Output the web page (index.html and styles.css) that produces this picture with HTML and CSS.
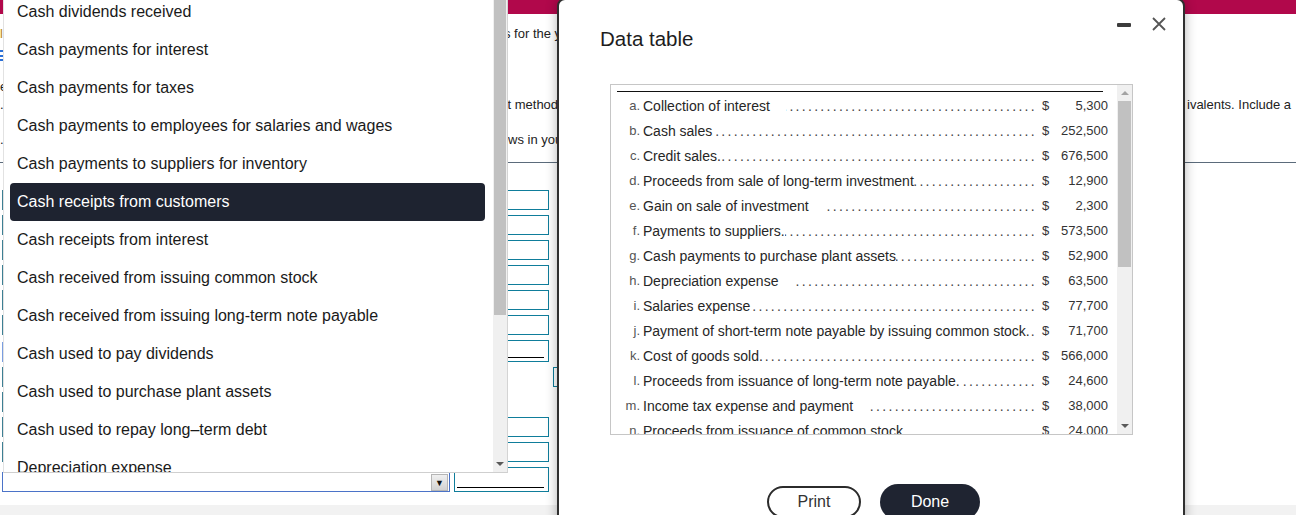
FILE: index.html
```html
<!DOCTYPE html>
<html>
<head>
<meta charset="utf-8">
<title>Data table</title>
<link rel="stylesheet" href="styles.css">
</head>
<body>
<div class="page">
  <div class="topbar"></div>
  <div class="lines">
    <div class="line l1"><span class="c1"><span class="tan">l</span></span><span class="c2 ind4">s for the year</span><span class="c3"></span><span class="c4"></span></div>
    <div class="line l-ico"><span class="c1"><span class="ico"></span></span><span class="c2"></span><span class="c3"></span><span class="c4"></span></div>
    <div class="line l-e"><span class="c1">e</span><span class="c2"></span><span class="c3"></span><span class="c4"></span></div>
    <div class="line l3"><span class="c1">.</span><span class="c2 ind7">ct method</span><span class="c3"></span><span class="c4 pad2">ivalents. Include a</span></div>
    <div class="line l4"><span class="c1">.</span><span class="c2">ws in your</span><span class="c3"></span><span class="c4"></span></div>
  </div>
  <div class="rule"></div>
  <div class="form">
    <div class="frow"><span></span><span class="sel"></span><span></span><span class="inp"></span></div>
    <div class="frow"><span></span><span class="sel"></span><span></span><span class="inp"></span></div>
    <div class="frow"><span></span><span class="sel"></span><span></span><span class="inp"></span></div>
    <div class="frow"><span></span><span class="sel"></span><span></span><span class="inp"></span></div>
    <div class="frow"><span></span><span class="sel"></span><span></span><span class="inp"></span></div>
    <div class="frow"><span></span><span class="sel"></span><span></span><span class="inp"></span></div>
    <div class="frow tall"><span></span><span class="sel sel-blue"></span><span></span><span class="inp total"></span></div>
    <div class="frow"><span></span><span class="sel"></span><span></span><span></span><span></span><span class="inp"></span></div>
    <div class="frow"><span></span><span class="sel"></span><span></span><span></span></div>
    <div class="frow"><span></span><span class="sel"></span><span></span><span class="inp"></span></div>
    <div class="frow"><span></span><span class="sel"></span><span></span><span class="inp"></span></div>
    <div class="frow last"><span></span><span class="sel sel-focus"><span class="sel-btn">&#9660;</span></span><span></span><span class="inp total"></span></div>
  </div>
  <div class="footer"></div>
</div>

<div class="dropdown">
  <div class="dd-list">
    <ul class="dd-items">
      <li>Cash dividends received</li>
      <li>Cash payments for interest</li>
      <li>Cash payments for taxes</li>
      <li>Cash payments to employees for salaries and wages</li>
      <li>Cash payments to suppliers for inventory</li>
      <li class="active">Cash receipts from customers</li>
      <li>Cash receipts from interest</li>
      <li>Cash received from issuing common stock</li>
      <li>Cash received from issuing long-term note payable</li>
      <li>Cash used to pay dividends</li>
      <li>Cash used to purchase plant assets</li>
      <li>Cash used to repay long–term debt</li>
      <li>Depreciation expense</li>
    </ul>
  </div>
  <div class="dd-scroll">
    <div class="dd-thumb"></div>
    <div class="dd-down"><span class="tri-down dark"></span></div>
  </div>
</div>

<div class="modal">
  <div class="modal-head">
    <h1 class="modal-title">Data table</h1>
    <div class="modal-tools">
      <span class="minimize"></span>
      <svg class="close" width="14" height="14" viewBox="0 0 14 14"><path d="M1 1L13 13M13 1L1 13" stroke="#555" stroke-width="1.8" fill="none"/></svg>
    </div>
  </div>
  <div class="tbox">
    <div class="tcontent">
      <div class="tline"></div>
      <div class="trow"><span class="lt">a.</span><span class="lb">Collection of interest</span><span class="dots gap">....................................................................................................</span><span class="cur">$</span><span class="amt">5,300</span></div>
      <div class="trow"><span class="lt">b.</span><span class="lb">Cash sales</span><span class="dots">....................................................................................................</span><span class="cur">$</span><span class="amt">252,500</span></div>
      <div class="trow"><span class="lt">c.</span><span class="lb">Credit sales.</span><span class="dots">....................................................................................................</span><span class="cur">$</span><span class="amt">676,500</span></div>
      <div class="trow"><span class="lt">d.</span><span class="lb">Proceeds from sale of long-term investment</span><span class="dots">....................................................................................................</span><span class="cur">$</span><span class="amt">12,900</span></div>
      <div class="trow"><span class="lt">e.</span><span class="lb">Gain on sale of investment</span><span class="dots gap">....................................................................................................</span><span class="cur">$</span><span class="amt">2,300</span></div>
      <div class="trow"><span class="lt">f.</span><span class="lb">Payments to suppliers.</span><span class="dots">....................................................................................................</span><span class="cur">$</span><span class="amt">573,500</span></div>
      <div class="trow"><span class="lt">g.</span><span class="lb">Cash payments to purchase plant assets</span><span class="dots">....................................................................................................</span><span class="cur">$</span><span class="amt">52,900</span></div>
      <div class="trow"><span class="lt">h.</span><span class="lb">Depreciation expense</span><span class="dots gap">....................................................................................................</span><span class="cur">$</span><span class="amt">63,500</span></div>
      <div class="trow"><span class="lt">i.</span><span class="lb">Salaries expense</span><span class="dots">....................................................................................................</span><span class="cur">$</span><span class="amt">77,700</span></div>
      <div class="trow"><span class="lt">j.</span><span class="lb">Payment of short-term note payable by issuing common stock.</span><span class="dots">....................................................................................................</span><span class="cur">$</span><span class="amt">71,700</span></div>
      <div class="trow"><span class="lt">k.</span><span class="lb">Cost of goods sold.</span><span class="dots">....................................................................................................</span><span class="cur">$</span><span class="amt">566,000</span></div>
      <div class="trow"><span class="lt">l.</span><span class="lb">Proceeds from issuance of long-term note payable.</span><span class="dots">....................................................................................................</span><span class="cur">$</span><span class="amt">24,600</span></div>
      <div class="trow"><span class="lt">m.</span><span class="lb">Income tax expense and payment</span><span class="dots gap">....................................................................................................</span><span class="cur">$</span><span class="amt">38,000</span></div>
      <div class="trow"><span class="lt">n.</span><span class="lb">Proceeds from issuance of common stock</span><span class="dots">....................................................................................................</span><span class="cur">$</span><span class="amt">24,000</span></div>
    </div>
    <div class="tscroll">
      <div class="ts-up"><span class="tri-up"></span></div>
      <div class="ts-thumb"></div>
      <div class="ts-track"></div>
      <div class="ts-down"><span class="tri-down dark"></span></div>
    </div>
  </div>
  <div class="modal-foot">
    <button class="btn btn-print">Print</button>
    <button class="btn btn-done">Done</button>
  </div>
</div>
</body>
</html>
```

FILE: styles.css
```css
html, body {
  margin: 0;
  padding: 0;
}
body {
  width: 1296px;
  height: 515px;
  overflow: hidden;
  position: relative;
  background: #fff;
  font-family: "Liberation Sans", Arial, sans-serif;
  color: #222;
}

/* ---------- background page ---------- */
.page {
  width: 1296px;
  height: 515px;
  display: flex;
  flex-direction: column;
}
.topbar {
  height: 14px;
  background: #b1084b;
  flex: none;
}
.lines {
  padding-top: 12px;
}
.line {
  display: grid;
  grid-template-columns: 508px 50px 627px 1fr;
  height: 16px;
  line-height: 16px;
  font-size: 13px;
  color: #222;
  white-space: nowrap;
}
.line > span {
  overflow: hidden;
}
.l-ico { margin-top: 5px; }
.l-e { margin-top: 16px; }
.l3 { margin-top: 2px; }
.l4 { margin-top: 19px; }
.ind4 { text-indent: -4px; }
.ind7 { text-indent: -7px; }
.pad2 { padding-left: 2px; }
.tan { color: #b8860b; }
.ico {
  display: inline-block;
  width: 5px;
  height: 11px;
  vertical-align: middle;
  background: repeating-linear-gradient(#2a6fd6 0 2px, transparent 2px 4.5px);
}
.rule {
  margin-top: 14px;
  height: 1px;
  background: #5b6b7b;
}
.form {
  padding-top: 27px;
  display: flex;
  flex-direction: column;
  gap: 5px;
}
.frow {
  display: grid;
  grid-template-columns: 2px 448px 4px 95px 4px 10px;
  height: 20px;
  align-items: end;
}
.frow.tall { height: 22px; }
.frow.last { height: 25px; }
.sel {
  height: 20px;
  box-sizing: border-box;
  border: 1px solid #3d7f93;
  background: #fff;
  position: relative;
}
.sel-blue { border-color: #7a9de0; }
.sel-focus {
  border-color: #4b73c8;
  display: flex;
  justify-content: flex-end;
  align-items: center;
  padding-right: 1px;
}
.sel-btn {
  width: 17px;
  height: 17px;
  box-sizing: border-box;
  border: 1px solid #b5b5b5;
  background: linear-gradient(#f0f0f0, #d2d2d2);
  font-size: 9px;
  line-height: 16px;
  text-align: center;
  color: #111;
}
.inp {
  height: 100%;
  box-sizing: border-box;
  border: 1.5px solid #0f7d9b;
  background: #fff;
}
.inp.total {
  background: linear-gradient(#000, #000) no-repeat;
  background-size: calc(100% - 6px) 1px;
  background-position: 2px calc(100% - 3px);
}
.footer {
  margin-top: auto;
  height: 10px;
  background: #f2f2f2;
}

/* ---------- dropdown list ---------- */
.dropdown {
  position: absolute;
  left: 3px;
  top: 0;
  width: 505px;
  height: 473px;
  box-sizing: border-box;
  background: #fff;
  border-left: 1px solid #e2e2e2;
  border-right: 1px solid #d4d4d4;
  border-bottom: 1px solid #cfcfcf;
  display: flex;
}
.dd-list {
  flex: 1;
  overflow: hidden;
}
.dd-items {
  list-style: none;
  margin: -7px 0 0 0;
  padding: 0;
}
.dd-items li {
  height: 38px;
  line-height: 38px;
  margin: 0 8px 0 6px;
  padding-left: 7px;
  font-size: 16px;
  color: #1a1a1a;
  white-space: nowrap;
  border-radius: 4px;
}
.dd-items li.active {
  background: #1e2330;
  color: #fff;
}
.dd-scroll {
  width: 14px;
  background: #f0f0f0;
  display: flex;
  flex-direction: column;
}
.dd-thumb {
  height: 315px;
  margin: 0 1px;
  background: #c1c1c1;
}
.dd-down {
  margin-top: auto;
  height: 17px;
  display: flex;
  align-items: center;
  justify-content: center;
}
.tri-down {
  width: 0;
  height: 0;
  border-left: 4px solid transparent;
  border-right: 4px solid transparent;
  border-top: 4px solid #a3a3a3;
}
.tri-down.dark { border-top-color: #5a5a5a; }
.tri-up {
  width: 0;
  height: 0;
  border-left: 4px solid transparent;
  border-right: 4px solid transparent;
  border-bottom: 4px solid #a3a3a3;
}

/* ---------- modal ---------- */
.modal {
  position: absolute;
  left: 557px;
  top: -2px;
  width: 628px;
  height: 540px;
  box-sizing: border-box;
  background: #fff;
  border: 2px solid #2f2f2f;
  border-radius: 8px;
  box-shadow: 0 0 12px rgba(0, 0, 0, 0.3);
  display: flex;
  flex-direction: column;
}
.modal-head {
  height: 84px;
  display: flex;
  align-items: flex-start;
  flex: none;
}
.modal-title {
  margin: 27px 0 0 41px;
  font-size: 20.5px;
  line-height: 24px;
  font-weight: normal;
  color: #1d1d1d;
}
.modal-tools {
  margin-left: auto;
  padding: 17px 17px 0 0;
  display: flex;
  align-items: flex-start;
  gap: 21px;
}
.minimize {
  margin-top: 6px;
  width: 14px;
  height: 4px;
  border-radius: 1px;
  background: #3c3c3c;
}
.close { display: block; }

.tbox {
  margin-left: 51px;
  width: 523px;
  height: 351px;
  box-sizing: border-box;
  border: 1px solid #c6c6c6;
  display: flex;
  flex: none;
}
.tcontent {
  flex: 1;
  min-width: 0;
  overflow: hidden;
  padding-top: 6px;
}
.tline {
  height: 1px;
  background: #111;
  margin: 0 14px 0 6px;
}
.trow {
  height: 25px;
  display: flex;
  align-items: center;
  white-space: nowrap;
  padding-right: 9px;
}
.tline + .trow { margin-top: 1px; }
.lt {
  width: 29px;
  flex: none;
  text-align: right;
  font-size: 13px;
  color: #555;
}
.lb {
  flex: none;
  padding-left: 3px;
  font-size: 14px;
  color: #262626;
}
.dots {
  flex: 1;
  min-width: 0;
  overflow: hidden;
  direction: rtl;
  font-size: 14px;
  letter-spacing: 2.3px;
  color: #444;
}
.dots.gap { margin-left: 16px; }
.cur {
  flex: none;
  margin-left: 5px;
  width: 9px;
  font-size: 13px;
  color: #333;
}
.amt {
  flex: none;
  width: 57px;
  text-align: right;
  font-size: 13px;
  color: #333;
}
.tscroll {
  width: 15px;
  flex: none;
  background: #f0f0f0;
  display: flex;
  flex-direction: column;
}
.ts-up {
  height: 16px;
  display: flex;
  align-items: center;
  justify-content: center;
}
.ts-thumb {
  height: 166px;
  margin: 0 1px;
  background: #c1c1c1;
}
.ts-track { flex: 1; }
.ts-down {
  height: 17px;
  display: flex;
  align-items: center;
  justify-content: center;
}

.modal-foot {
  margin-top: 49px;
  display: flex;
  justify-content: center;
  align-items: center;
  gap: 19px;
  padding-left: 5px;
}
.btn {
  font-family: "Liberation Sans", Arial, sans-serif;
  font-size: 16px;
  box-sizing: border-box;
  cursor: pointer;
}
.btn-print {
  width: 94px;
  height: 32px;
  border: 2px solid #2b2b2b;
  border-radius: 16px;
  background: #fff;
  color: #333;
}
.btn-done {
  width: 100px;
  height: 36px;
  border: none;
  border-radius: 18px;
  background: #1f2431;
  color: #fff;
}
```
